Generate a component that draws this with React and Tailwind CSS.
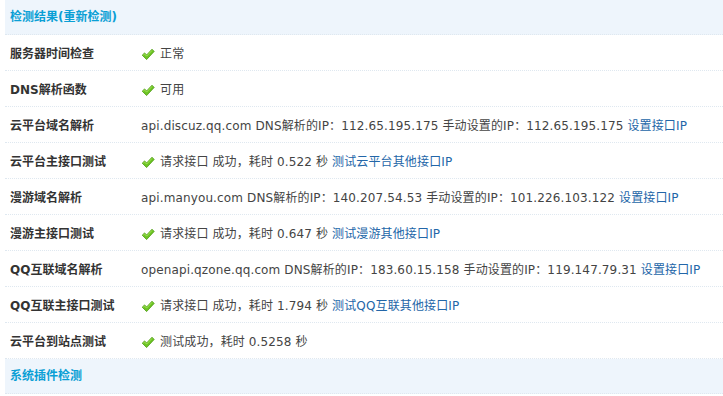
import React from "react";

const font = { fontFamily: '"DejaVu Sans", Tahoma, "Noto Sans CJK SC", sans-serif' };

function Check() {
  return (
    <svg width="14" height="13" viewBox="0 0 14 13" className="mr-[5px] shrink-0">
      <path d="M1.2 7.2 L3.6 4.9 L5.6 7 L11 1.2 L13.2 3.4 L5.6 11.6 Z" fill="#6cc423" stroke="#4f9a16" strokeWidth="0.8" strokeLinejoin="round" />
      <path d="M2.3 7.2 L3.6 6 L5.6 8.1 L11 2.4" fill="none" stroke="#a6e45a" strokeWidth="0.9" />
    </svg>
  );
}

const A = ({ children }) => <span className="text-[#2366a8]">{children}</span>;

function Row({ label, children }) {
  return (
    <div className="flex items-center h-[36px] pt-[3px] border-b border-dotted border-[#dfe8f0]">
      <div className="w-[136px] pl-[5px] font-bold text-[#333] shrink-0">{label}</div>
      <div className="flex items-center text-[#444] whitespace-nowrap tracking-[0.13px]">{children}</div>
    </div>
  );
}

function Header({ children }) {
  return (
    <div className="h-[35px] flex items-center pl-[5px] bg-[#eef5fc] border-b border-dotted border-[#dfe8f0] font-bold text-[#0a9fd5]">
      {children}
    </div>
  );
}

export default function App() {
  return (
    <div className="w-[723px] h-[396px] bg-white overflow-hidden text-[12px] pl-[5px]" style={font}>
      <Header>检测结果(重新检测)</Header>
      <Row label="服务器时间检查"><Check />正常</Row>
      <Row label="DNS解析函数"><Check />可用</Row>
      <Row label="云平台域名解析">
        api.discuz.qq.com DNS解析的IP：112.65.195.175 手动设置的IP：112.65.195.175&nbsp;<A>设置接口IP</A>
      </Row>
      <Row label="云平台主接口测试">
        <Check />请求接口 成功，耗时 0.522 秒&nbsp;<A>测试云平台其他接口IP</A>
      </Row>
      <Row label="漫游域名解析">
        api.manyou.com DNS解析的IP：140.207.54.53 手动设置的IP：101.226.103.122&nbsp;<A>设置接口IP</A>
      </Row>
      <Row label="漫游主接口测试">
        <Check />请求接口 成功，耗时 0.647 秒&nbsp;<A>测试漫游其他接口IP</A>
      </Row>
      <Row label="QQ互联域名解析">
        openapi.qzone.qq.com DNS解析的IP：183.60.15.158 手动设置的IP：119.147.79.31&nbsp;<A>设置接口IP</A>
      </Row>
      <Row label="QQ互联主接口测试">
        <Check />请求接口 成功，耗时 1.794 秒&nbsp;<A>测试QQ互联其他接口IP</A>
      </Row>
      <Row label="云平台到站点测试">
        <Check />测试成功，耗时 0.5258 秒
      </Row>
      <Header>系统插件检测</Header>
    </div>
  );
}
